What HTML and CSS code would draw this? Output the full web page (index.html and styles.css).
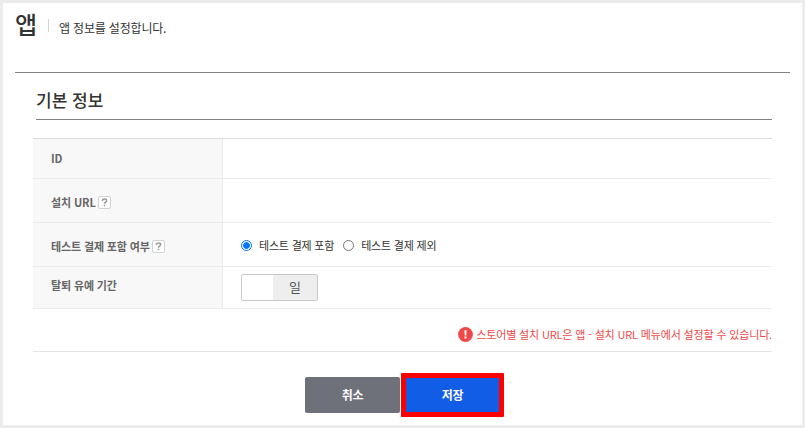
FILE: index.html
```html
<!DOCTYPE html>
<html lang="ko">
<head>
<meta charset="utf-8">
<title>앱</title>
<link rel="stylesheet" href="styles.css">
</head>
<body>
<main class="page">
  <header class="page-header">
    <h1 class="page-title">앱</h1>
    <span class="divider"></span>
    <p class="page-desc">앱 정보를 설정합니다.</p>
  </header>
  <h2 class="section-title">기본 정보</h2>
  <form class="form">
    <div class="row row-id"><div class="label">ID</div><div class="value"></div></div>
    <div class="row row-url"><div class="label">설치 URL<span class="help"><svg width="13" height="13" viewBox="1 1 11 11"><path d="M4.4 5V4.5C4.4 2.5 8.6 2.5 8.6 4.6C8.6 6.1 6.5 6.1 6.5 7.8M6.5 8.8V10.2" /></svg></span></div><div class="value"></div></div>
    <div class="row row-test"><div class="label">테스트 결제 포함 여부<span class="help"><svg width="13" height="13" viewBox="1 1 11 11"><path d="M4.4 5V4.5C4.4 2.5 8.6 2.5 8.6 4.6C8.6 6.1 6.5 6.1 6.5 7.8M6.5 8.8V10.2" /></svg></span></div>
      <div class="value">
        <label class="option"><span class="radio checked"></span>테스트 결제 포함</label>
        <label class="option"><span class="radio"></span>테스트 결제 제외</label>
      </div>
    </div>
    <div class="row row-period"><div class="label">탈퇴 유예 기간</div>
      <div class="value"><div class="period"><span class="period-input"></span><span class="unit">일</span></div></div>
    </div>
    <p class="notice"><svg width="15" height="15" viewBox="0 0 15 15"><circle cx="7.5" cy="7.5" r="7.4" fill="#f04848"/><path d="M6.4 3.2h2.2l-.3 5.3H6.7zM6.5 9.5h2v2h-2z" fill="#fff"/></svg>스토어별 설치 URL은 앱 - 설치 URL 메뉴에서 설정할 수 있습니다.</p>
    <div class="actions">
      <button type="button" class="btn cancel">취소</button>
      <button type="button" class="btn save">저장</button>
    </div>
  </form>
</main>
</body>
</html>
```
FILE: styles.css
```css
* { box-sizing: border-box; }
body {
  margin: 0;
  font-family: "Noto Sans CJK KR", sans-serif;
  color: #333;
}
h1, h2, p { margin: 0; }
.page {
  height: 428px;
  border: 3px solid #ececec;
  background: #fff;
  overflow: hidden;
}
.page-header {
  display: flex;
  height: 70px;
  margin: 0 12px;
  border-bottom: 1px solid #828282;
}
.page-title { width: 33px; padding-top: 4px; font-size: 24px; line-height: 34px; font-weight: 500; }
.divider { width: 1px; height: 13px; margin-top: 16px; background: #d5d5d5; }
.page-desc { padding: 16px 0 0 10px; font-size: 12px; line-height: 18px; letter-spacing: -0.18px; }
.section-title {
  height: 47px;
  margin: 0 30px 0 33px;
  padding-top: 14px;
  border-bottom: 1px solid #828282;
  font-size: 17px;
  line-height: 25px;
  font-weight: 500;
}
.form { margin: 18px 30px 0; border-top: 1px solid #dcdcdc; }
.row { display: flex; border-bottom: 1px solid #ebebeb; }
.row-id { height: 40px; }
.row-url, .row-test { height: 44px; }
.row-period { height: 42px; }
.label {
  display: flex;
  align-items: center;
  width: 190px;
  padding-left: 18px;
  border-right: 1px solid #ebebeb;
  background: #f8f8f8;
  color: #666;
  font-size: 11px;
  font-weight: 700;
  letter-spacing: -0.13px;
}
.row-id .label { padding-bottom: 1px; }
.row-url .label { padding-top: 3px; }
.row-test .label { padding-top: 3px; }
.row-period .label { padding-bottom: 5px; }
.help { display: flex; width: 13px; height: 13px; margin-left: 2px; }
.help svg { border: 1px solid #d2d2d2; border-radius: 2px; background: #fff; }
.help path { fill: none; stroke: #999; stroke-width: 1.5; }
.value { display: flex; align-items: center; padding-left: 18px; }
.option { display: flex; align-items: center; margin-right: 9px; font-size: 11px; letter-spacing: -0.2px; }
.radio { width: 11px; height: 11px; margin: 2px 7px 0 0; border: 1px solid #767676; border-radius: 50%; background: #fff; }
.radio.checked { border-color: #0075ff; background: radial-gradient(circle, #0075ff 3px, #fff 3.7px); }
.period {
  display: flex;
  width: 77px;
  height: 27px;
  border: 1px solid #c8c8c8;
  border-radius: 2px;
  overflow: hidden;
}
.period-input { width: 31px; background: #fff; }
.unit { flex: 1; background: #eee; color: #555; font-size: 13px; line-height: 24px; text-align: center; }
.notice {
  display: flex;
  align-items: center;
  justify-content: flex-end;
  height: 43px;
  padding-top: 8px;
  border-bottom: 1px solid #e5e5e5;
  color: #f04848;
  font-size: 11px;
  letter-spacing: -0.16px;
}
.notice svg { margin-right: 3px; }
.actions { display: flex; justify-content: flex-start; gap: 1px; padding: 21px 0 0 272px; }
.btn { padding: 0 0 1px; border: 0; color: #fff; font-family: inherit; font-size: 12px; font-weight: 700; letter-spacing: -0.2px; }
.cancel { width: 95px; height: 36px; margin-top: 4px; border-radius: 2px; background: #6e717a; }
.save { width: 103px; height: 44px; border: 5px solid #f00; border-radius: 1px; background: #125de6; }
```
